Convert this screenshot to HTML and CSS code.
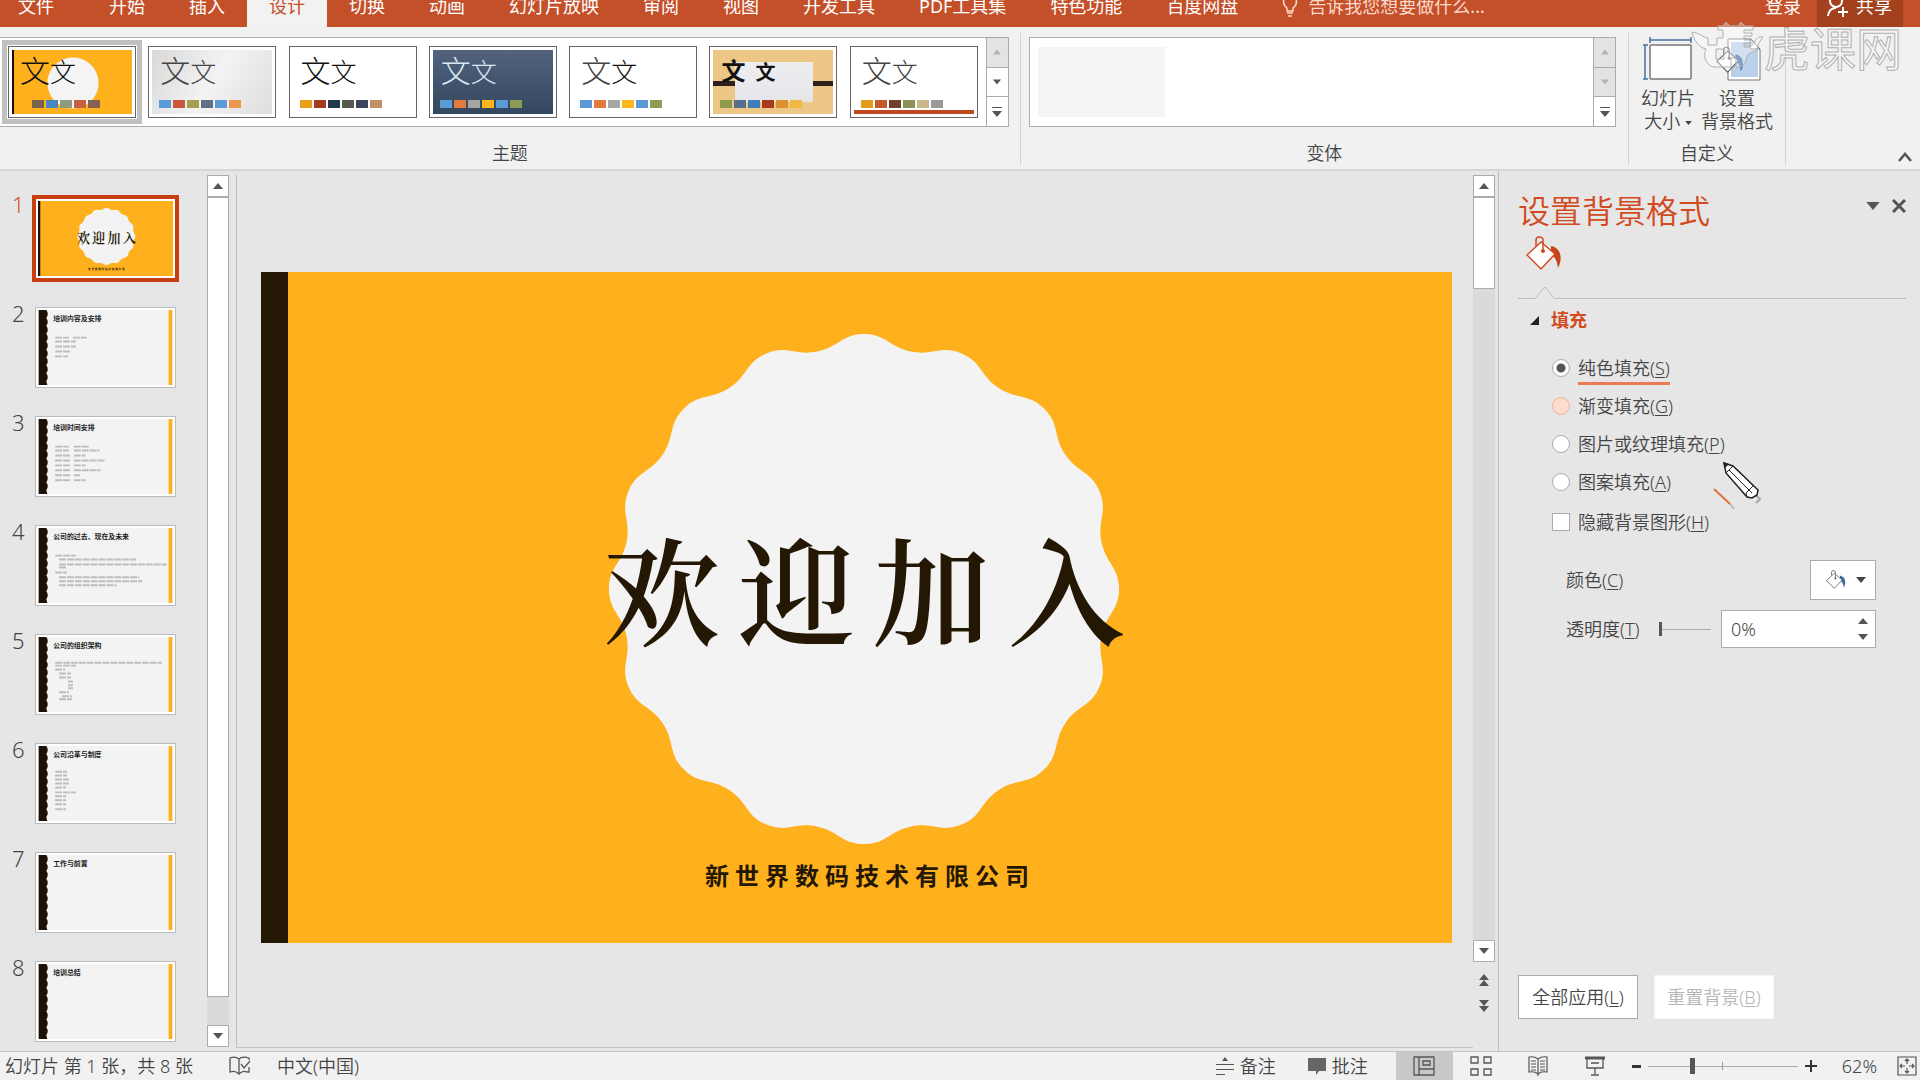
FILE: index.html
```html
<!DOCTYPE html>
<html lang="zh-CN">
<head>
<meta charset="utf-8">
<title>演示文稿</title>
<link rel="stylesheet" href="styles.css">
</head>
<body>
<svg class="defs" aria-hidden="true">
  <defs>
    <path id="quarter" d="M-4 0V-255H0C22-255 25.600-241.700 47.200-237.400C68.800-233.100 77.300-244 97.600-235.600C117.900-227.200 116.100-213.400 134.400-201.200C152.700-189 164.700-195.900 180.300-180.300C195.900-164.700 189-152.700 201.200-134.400C213.400-116.100 227.200-117.900 235.600-97.600C244-77.300 233.100-68.800 237.400-47.200C241.700-25.600 255-22 255 0V4H0Z"/>
    <g id="badge"><circle r="241"/><use href="#quarter"/><use href="#quarter" transform="rotate(90)"/><use href="#quarter" transform="rotate(180)"/><use href="#quarter" transform="rotate(270)"/></g>
    <symbol id="page" viewBox="0 0 136 76" preserveAspectRatio="none">
      <path fill="#f3f3f3" d="M0 0H136V76H0Z"/><path fill="#ffb11d" d="M132 0H136V76H132Z"/>
      <path fill="#1d1105" d="M0 0H8Q11 4 8 8Q11 12 8 16Q11 20 8 24Q11 28 8 32Q11 36 8 40Q11 44 8 48Q11 52 8 56Q11 60 8 64Q11 68 8 72L9 76H0Z"/>
    </symbol>
    <symbol id="bucket" viewBox="0 0 36 36">
      <path class="drop" d="M25 10C35 12 37 22 32 32C31 25 30 22 25 19Z"/>
      <path fill="#fff" stroke="currentColor" stroke-width="1.500" d="M15 6L29 18L15 33L1 19Z"/>
      <path fill="none" stroke="currentColor" stroke-width="1.500" d="M10 10V4Q10 1 13 1Q17 1 17 4V14"/><circle cx="17" cy="15" r="2" fill="currentColor"/>
    </symbol>
    <symbol id="up" viewBox="0 0 10 6"><path fill="currentColor" d="M5 0L10 6H0Z"/></symbol>
    <symbol id="down" viewBox="0 0 10 6"><path fill="currentColor" d="M0 0H10L5 6Z"/></symbol>
    <symbol id="more" viewBox="0 0 10 10"><path fill="currentColor" d="M0 0H10V1H0ZM0 4H10L5 10Z"/></symbol>
  </defs>
</svg>

<header class="tabs">
  <nav class="tab-list">
    <button class="tab file">文件</button><button class="tab">开始</button><button class="tab">插入</button><button class="tab active">设计</button><button class="tab">切换</button><button class="tab">动画</button><button class="tab">幻灯片放映</button><button class="tab">审阅</button><button class="tab">视图</button><button class="tab">开发工具</button><button class="tab">PDF工具集</button><button class="tab">特色功能</button><button class="tab">百度网盘</button>
  </nav>
  <button class="tell"><svg width="16" height="22" viewBox="0 0 16 22" fill="none" stroke="currentColor" stroke-width="1.500"><path d="M5 16V13C0 9 0 1 8 1S16 9 11 13V16ZM5 18H11M6 21H10"/></svg>告诉我您想要做什么...</button>
  <button class="login">登录</button>
  <button class="share"><svg width="24" height="24" viewBox="0 0 24 24" fill="none" stroke="currentColor" stroke-width="2"><circle cx="10" cy="7" r="6"/><path d="M2 22Q3 14 10 14M17 13V23M12 18H22"/></svg>共享</button>
</header>

<section class="ribbon">
  <div class="group themes">
    <div class="gallery">
      <div class="theme-list">
        <button class="theme t1 selected"><span class="wen"><b>文</b>文</span><i class="sw"><i></i><i></i><i></i><i></i><i></i></i></button>
        <button class="theme t2"><span class="wen"><b>文</b>文</span><i class="sw"><i></i><i></i><i></i><i></i><i></i><i></i></i></button>
        <button class="theme t3"><span class="wen"><b>文</b>文</span><i class="sw"><i></i><i></i><i></i><i></i><i></i><i></i></i></button>
        <button class="theme t4"><span class="wen"><b>文</b>文</span><i class="sw"><i></i><i></i><i></i><i></i><i></i><i></i></i></button>
        <button class="theme t5"><span class="wen"><b>文</b>文</span><i class="sw"><i></i><i></i><i></i><i></i><i></i><i></i></i></button>
        <button class="theme t6"><span class="wen"><b>文</b>文</span><i class="sw"><i></i><i></i><i></i><i></i><i></i><i></i></i></button>
        <button class="theme t7"><span class="wen"><b>文</b>文</span><i class="sw"><i></i><i></i><i></i><i></i><i></i><i></i></i></button>
      </div>
      <div class="steps"><button class="off" aria-label="上一行"><svg width="8" height="6"><use href="#up"/></svg></button><button aria-label="下一行"><svg width="8" height="6"><use href="#down"/></svg></button><button aria-label="其他"><svg width="10" height="10"><use href="#more"/></svg></button></div>
    </div>
    <div class="caption">主题</div>
  </div>
  <div class="group variants">
    <div class="gallery">
      <div class="variant-list"><div class="variant"></div></div>
      <div class="steps"><button class="off" aria-label="上一行"><svg width="8" height="6"><use href="#up"/></svg></button><button class="off" aria-label="下一行"><svg width="8" height="6"><use href="#down"/></svg></button><button aria-label="其他"><svg width="10" height="10"><use href="#more"/></svg></button></div>
    </div>
    <div class="caption">变体</div>
  </div>
  <div class="group custom">
    <div class="big-row">
      <button class="big"><svg width="50" height="44" viewBox="0 0 50 44" fill="none"><path stroke="#4472a8" stroke-width="1.500" d="M7 3H48M7 0V6M48 0V6M2 8V42M0 8H5M0 42H5"/><rect x="7" y="8" width="41" height="34" rx="1" fill="#fff" stroke="#777" stroke-width="1.500"/></svg><span>幻灯片<br>大小 <svg width="7" height="4"><use href="#down"/></svg></span></button>
      <button class="big"><svg width="50" height="44" viewBox="0 0 50 44"><path fill="#fff" stroke="#777" d="M16 2H39L48 12V43H16Z"/><path fill="#b9d0ea" d="M19 5H37V13H46V40H19Z"/><path fill="none" stroke="#777" d="M38 2V12H48"/><svg class="blue" x="4" y="8" width="28" height="31"><use href="#bucket"/></svg></svg><span>设置<br>背景格式</span></button>
    </div>
    <div class="caption">自定义</div>
  </div>
  <div class="tail"><button class="fold" aria-label="折叠功能区"><svg width="14" height="10" viewBox="0 0 14 10" fill="none" stroke="#555" stroke-width="2.500"><path d="M1 9L7 2L13 9"/></svg></button></div>
  <div class="mark"><svg width="74" height="50" viewBox="0 0 74 50"><path d="M2 11C10 12 12 16 18 17V24H27V17H33V9H28V5H33L36 1L40 5H48L51 1L55 5H63V9H54V12H62V15H54V19H62V22H54V26H60C65 23 66 14 73 16C66 24 69 30 60 32C54 35 59 40 51 46H46V37H41V46H23C15 43 13 35 16 28C8 26 4 19 2 11ZM26 28V38H34V28Z"/></svg><span>虎课网</span></div>
</section>

<main class="work">
  <ol class="slides">
    <li class="current"><span class="no">1</span><svg class="thumb" viewBox="0 0 1191 671" preserveAspectRatio="none"><path fill="#ffb11d" d="M0 0H1191V671H0Z"/><path fill="#1d1105" d="M0 0H20V671H0Z"/><use href="#badge" x="603" y="317" fill="#f3f3f3"/><text class="s-title" x="612" y="372">欢迎加入</text><text class="s-sub" x="606" y="613">新世界数码技术有限公司</text></svg></li>
    <li><span class="no">2</span><svg class="thumb" viewBox="0 0 136 76"><use href="#page"/><text x="15" y="11">培训内容及安排</text><path class="ln" d="M17 28H31M35 28H49M17 32H38M17 37H38M17 42H32M17 47H30"/></svg></li>
    <li><span class="no">3</span><svg class="thumb" viewBox="0 0 136 76"><use href="#page"/><text x="15" y="11">培训时间安排</text><path class="ln" d="M17 28H31M36 28H51M17 32H31M36 32H62M17 37H33M36 37H48M17 42H33M36 42H68M17 47H33M36 47H48M17 52H33M36 52H63M17 57H33M36 57H42M17 62H33M36 62H48"/></svg></li>
    <li><span class="no">4</span><svg class="thumb" viewBox="0 0 136 76"><use href="#page"/><text x="15" y="11">公司的过去、现在及未来</text><path class="ln" d="M17 28H38M21 32H99M21 37H130M21 40H28M17 45H29M21 50H102M21 54H105M21 58H79"/></svg></li>
    <li><span class="no">5</span><svg class="thumb" viewBox="0 0 136 76"><use href="#page"/><text x="15" y="11">公司的组织架构</text><path class="ln" d="M17 26H125M17 29H38M17 33H27M21 37H33M21 41H33M30 45H35M30 49H35M30 52H35M21 56H31M24 60H34M21 63H34"/></svg></li>
    <li><span class="no">6</span><svg class="thumb" viewBox="0 0 136 76"><use href="#page"/><text x="15" y="11">公司沿革与制度</text><path class="ln" d="M17 26H29M17 30H29M17 34H31M17 38H31M17 42H28M17 47H38M17 51H28M17 55H28M17 59H28M17 64H28"/></svg></li>
    <li><span class="no">7</span><svg class="thumb" viewBox="0 0 136 76"><use href="#page"/><text x="15" y="11">工作与前置</text></svg></li>
    <li><span class="no">8</span><svg class="thumb" viewBox="0 0 136 76"><use href="#page"/><text x="15" y="11">培训总结</text></svg></li>
  </ol>
  <div class="bar left"><button aria-label="向上"><svg width="10" height="6"><use href="#up"/></svg></button><div class="grip"></div><div class="rest"></div><button aria-label="向下"><svg width="10" height="6"><use href="#down"/></svg></button></div>

  <div class="stage">
    <svg class="slide" viewBox="0 0 1191 671"><path fill="#ffb11d" d="M0 0H1191V671H0Z"/><path fill="#241703" d="M0 0H27V671H0Z"/><use href="#badge" x="603" y="317" fill="#f3f3f3"/><text class="s-title" x="612" y="365">欢迎加入</text><text class="s-sub" x="609" y="613">新世界数码技术有限公司</text></svg>
  </div>
  <div class="bar right"><button aria-label="向上"><svg width="10" height="6"><use href="#up"/></svg></button><div class="grip"></div><div class="rest"></div><button aria-label="向下"><svg width="10" height="6"><use href="#down"/></svg></button>
    <div class="jumps"><button aria-label="上一张"><svg width="10" height="12"><path d="M5 0L10 6H0ZM5 6L10 12H0Z"/></svg></button><button aria-label="下一张"><svg width="10" height="12"><path d="M5 6L10 0H0ZM5 12L10 6H0Z"/></svg></button></div></div>

  <aside class="pane">
    <div class="pane-head"><h2>设置背景格式</h2><button aria-label="选项"><svg width="14" height="8"><use href="#down"/></svg></button><button aria-label="关闭"><svg width="14" height="14" viewBox="0 0 14 14" stroke="currentColor" stroke-width="3"><path d="M1 1L13 13M13 1L1 13"/></svg></button></div>
    <button class="fill-tab" aria-label="填充"><svg width="36" height="36"><use href="#bucket"/></svg></button>
    <div class="rule"><svg width="37" height="13" viewBox="0 0 37 13" fill="none" stroke="#bdbdbd"><path d="M0 12.500H17L27 1L36 12.500"/></svg><i></i></div>
    <h3><svg width="9" height="9"><path d="M9 0V9H0Z"/></svg>填充</h3>
    <div class="options">
      <label class="picked"><input type="radio" name="fill" checked><span>纯色填充(<u>S</u>)</span></label>
      <label class="hover"><input type="radio" name="fill"><span>渐变填充(<u>G</u>)</span></label>
      <label><input type="radio" name="fill"><span>图片或纹理填充(<u>P</u>)</span></label>
      <label><input type="radio" name="fill"><span>图案填充(<u>A</u>)</span></label>
      <label class="check"><input type="checkbox"><span>隐藏背景图形(<u>H</u>)</span></label>
    </div>
    <div class="field"><label for="color">颜色(<u>C</u>)</label><button id="color" class="color"><svg class="blue" width="20" height="20"><use href="#bucket"/></svg><svg width="10" height="6"><use href="#down"/></svg></button></div>
    <div class="field"><label for="alpha">透明度(<u>T</u>)</label><input class="range" type="range" min="0" max="100" value="0" aria-label="透明度"><div class="spin"><input id="alpha" type="text" value="0%"><div><button aria-label="增加"><svg width="10" height="6"><use href="#up"/></svg></button><button aria-label="减少"><svg width="10" height="6"><use href="#down"/></svg></button></div></div></div>
    <div class="actions"><button>全部应用(<u>L</u>)</button><button disabled>重置背景(<u>B</u>)</button></div>
    <svg class="pencil" width="54" height="54" viewBox="0 0 54 54"><path stroke="#a9a9a9" stroke-width="2" d="M24 16L48 38L44 42"/><path stroke="#e2703f" stroke-width="2" d="M2 28L18 43"/><path stroke="#b9b9b9" stroke-width="2" d="M18 43L22 48"/><path fill="#fff" stroke="#222" stroke-width="1.500" d="M12 2L21 5L46 29L45 34L40 37L35 36L14 12Z"/><path fill="none" stroke="#222" d="M14 12L21 5M17 9L40 32M35 36L34 32L41 25"/><path fill="#222" d="M11 1L17 3L13 7Z"/></svg>
  </aside>
</main>

<footer class="status">
  <span class="count">幻灯片 第 1 张，共 8 张</span>
  <button class="spell" aria-label="拼写检查"><svg width="22" height="20" viewBox="0 0 22 20" fill="none" stroke="#555" stroke-width="1.300"><path d="M10 17V3Q6 0 1 2V16Q6 14 10 18Q14 14 18 16H20V11M10 3Q13 0 20 2V4M12 8L15 12L21 5"/></svg></button>
  <button class="lang">中文(中国)</button>
  <span class="space"></span>
  <button class="note"><svg width="18" height="18" viewBox="0 0 18 18"><path fill="#555" d="M9 0L12 4H6ZM0 7H18V8H0ZM0 12H18V13H0ZM0 17H9V18H0Z"/></svg>备注</button>
  <button class="comment"><svg width="18" height="18" viewBox="0 0 18 18"><path fill="#666" d="M0 1H18V14H11L8 18V14H0Z"/></svg>批注</button>
  <button class="view on" aria-label="普通视图"><svg width="22" height="20" viewBox="0 0 22 20" fill="none" stroke="#555" stroke-width="1.300"><path d="M1 1H21V19H1ZM6 1V19M6 13H21M10 5H17V9H10Z"/></svg></button>
  <button class="view" aria-label="幻灯片浏览"><svg width="22" height="20" viewBox="0 0 22 20" fill="none" stroke="#555" stroke-width="1.300"><path d="M1 1H8V7H1ZM14 1H21V7H14ZM1 13H8V19H1ZM14 13H21V19H14Z"/></svg></button>
  <button class="view" aria-label="阅读视图"><svg width="20" height="20" viewBox="0 0 20 20" fill="none" stroke="#555" stroke-width="1.200"><path d="M10 3Q6 0 1 1V16Q7 15 10 18Q13 15 19 16V1Q14 0 10 3V20M3 5H8M3 8H8M3 11H8M3 14H8M12 5H17M12 8H17M12 11H17M12 14H17"/></svg></button>
  <button class="view" aria-label="幻灯片放映"><svg width="20" height="20" viewBox="0 0 20 20" fill="none" stroke="#555" stroke-width="1.300"><path d="M2 3V12H18V3M10 12V18M6 19H14M6 7H14"/><path stroke-width="3" d="M0 2H20"/></svg></button>
  <button class="zoom" aria-label="缩小"><svg width="9" height="12"><path fill="#333" d="M0 5H9V8H0Z"/></svg></button>
  <input class="range zoomer" type="range" min="0" max="100" value="29" aria-label="缩放">
  <button class="zoom" aria-label="放大"><svg width="12" height="12"><path fill="#333" d="M0 5H5V0H7V5H12V7H7V12H5V7H0Z"/></svg></button>
  <button class="pct">62%</button>
  <button class="fit" aria-label="适应窗口"><svg width="20" height="20" viewBox="0 0 20 20" fill="none" stroke="#555" stroke-width="1.200"><path d="M1 1H19V19H1ZM10 3V8M8 5L10 3L12 5M10 12V17M8 15L10 17L12 15M3 10H8M5 8L3 10L5 12M12 10H17M15 8L17 10L15 12"/></svg></button>
</footer>
</body>
</html>
```

FILE: styles.css
```css
* { box-sizing: border-box; }
body {
  margin: 0; height: 100vh; display: flex; flex-direction: column; overflow: hidden;
  font: 18px/24px "Noto Sans", "Noto Sans CJK SC", sans-serif; font-weight: 350;
  color: #444; background: #e6e6e6;
}
button, input { font: inherit; color: inherit; }
button { margin: 0; padding: 0; border: 0; background: none; white-space: nowrap; }
svg { display: block; flex: none; }
.defs { position: absolute; width: 0; height: 0; }
.drop { fill: var(--drop, #c8421a); }
.blue { color: #666; --drop: #3c6ca8; }

/* Tab strip */
.tabs { flex: none; height: 27px; display: flex; background: #c4502a; color: #fff; overflow: hidden; font-weight: 400; }
.tab-list { display: flex; }
.tabs button { height: 27px; line-height: 12px; padding: 0 22px 15px; }
.tabs .file { padding: 0 33px 15px 18px; }
.tabs .active { background: #f3f2f2; color: #c4502a; }
.tabs .tell { display: flex; align-items: center; gap: 10px; color: #fbd9cb; margin-right: auto; }
.tabs .login { padding: 0 16px 15px; }
.tabs .share { display: flex; align-items: center; gap: 6px; background: #a3401d; padding: 0 11px 15px 9px; margin-right: 17px; }

/* Ribbon */
.ribbon { flex: none; height: 144px; display: flex; position: relative; background: #f1f1f1; border-bottom: 2px solid #d6d6d6; padding: 6px 0 4px; }
.group { display: flex; flex-direction: column; justify-content: space-between; border-right: 1px solid #d2d2d2; padding-top: 4px; }
.themes { flex: 1021; }
.variants { flex: 608; }
.custom { flex: 0 0 157px; }
.caption { text-align: center; line-height: 24px; }
.gallery { display: flex; height: 90px; border: 1px solid #ababab; background: #fff; }
.themes .gallery { border-left: 0; margin-right: 11px; }
.variants .gallery { margin: 0 12px 0 8px; }
.theme-list { flex: 1; display: flex; justify-content: space-between; align-items: center; padding: 0 8px; }
.theme { width: 128px; height: 72px; border: 1px solid #666; padding: 3px; display: flex; flex-direction: column; color: #111; text-align: left; background-color: #fff; background-origin: content-box; background-clip: content-box; }
.theme.selected { box-shadow: 0 0 0 1px #fff, 0 0 0 6px #c0c0c0; }
.wen { font-size: 26px; line-height: 38px; height: 50px; padding: 2px 0 0 8px; font-weight: 300; }
.wen b { font-size: 30px; font-weight: 300; }
.sw { display: flex; gap: 2px; padding-left: 7px; }
.sw i { width: 12px; height: 8px; background: #5b9bd5; }
.sw i:nth-child(2) { background: #c55a36; } .sw i:nth-child(3) { background: #a3a14c; } .sw i:nth-child(4) { background: #5f7189; } .sw i:nth-child(6) { background: #e8994b; }
.t1 { background-color: #ffb11d; background-image: linear-gradient(90deg, #111 2px, transparent 2px), radial-gradient(circle at 61px 33px, #f4f4f4 25px, transparent 26px); }
.t1 .sw { padding-left: 20px; }
.t1 .sw i { background: #76654c; } .t1 .sw i:nth-child(2) { background: #4488bd; } .t1 .sw i:nth-child(3) { background: #8d9c80; } .t1 .sw i:nth-child(4) { background: #c65f43; } .t1 .sw i:nth-child(5) { background: #866153; }
.t2 { background-image: linear-gradient(120deg, #d8d8d8, #f3f3f3 50%, #dedede); }
.t2 .wen, .t5 .wen b, .t7 .wen { color: #444; }
.t3 .sw i { background: #e9a019; } .t3 .sw i:nth-child(2) { background: #a63c1c; } .t3 .sw i:nth-child(3) { background: #26384f; } .t3 .sw i:nth-child(4) { background: #565a4e; } .t3 .sw i:nth-child(5) { background: #39465a; } .t3 .sw i:nth-child(6) { background: #bf9061; }
.t4 { background-image: linear-gradient(#53637e, #33475e); } .t4 .wen { color: #dbe7f5; }
.t4 .sw i:nth-child(2), .t5 .sw i:nth-child(2) { background: #e27b3d; }
.t4 .sw i:nth-child(3), .t5 .sw i:nth-child(3) { background: #a5a5a5; } .t4 .sw i:nth-child(4), .t5 .sw i:nth-child(4) { background: #ffb71c; } .t4 .sw i:nth-child(6), .t5 .sw i:nth-child(6) { background: #8e9b55; }
.t6 { background-color: #ecc785; background-image: linear-gradient(#eeeef1, #e6e6ea), linear-gradient(transparent 31px, #30201b 31px, #30201b 36px, transparent 36px); background-size: 78px 40px, auto; background-position: 22px 12px, 0 0; background-repeat: no-repeat; }
.t6 .wen { font-weight: 700; font-size: 20px; } .t6 .wen b { font-weight: 700; font-size: 24px; margin-right: 10px; }
.t6 .sw i { background: #8e9b4e; } .t6 .sw i:nth-child(2) { background: #566f91; } .t6 .sw i:nth-child(3) { background: #3f7dbb; } .t6 .sw i:nth-child(4) { background: #a63c1c; } .t6 .sw i:nth-child(5) { background: #df9132; } .t6 .sw i:nth-child(6) { background: #eeb842; }
.t7 { background-image: linear-gradient(transparent 60px, #bd4a20 60px); }
.t7 .sw i { background: #e39c1b; } .t7 .sw i:nth-child(2) { background: #c75829; } .t7 .sw i:nth-child(3) { background: #70402e; } .t7 .sw i:nth-child(4) { background: #8c9156; } .t7 .sw i:nth-child(5) { background: #c7b98a; } .t7 .sw i:nth-child(6) { background: #999; }
.variant-list { flex: 1; padding: 9px 8px; }
.variant { width: 127px; height: 70px; background: #f4f3f6; }
.steps { width: 22px; display: flex; flex-direction: column; border-left: 1px solid #ababab; color: #555; }
.steps button { flex: 1; display: grid; place-items: center; }
.steps button + button { border-top: 1px solid #ababab; }
.steps .off { background: #e3e3e3; color: #b3b3b3; }
.big-row { display: flex; padding-left: 9px; }
.big { width: 60px; line-height: 23px; }
.big + .big { width: 78px; }
.big > svg { margin: 0 auto 6px; }
.big span svg { display: inline-block; vertical-align: middle; }
.tail { flex: 0 0 134px; display: flex; justify-content: flex-end; align-items: flex-end; padding: 0 8px 3px; }
.mark { position: absolute; right: 18px; top: -6px; display: flex; align-items: center; color: rgba(255, 255, 255, .35); -webkit-text-stroke: 1px #b0b0b0; font: 400 46px/46px "Noto Sans CJK SC", sans-serif; pointer-events: none; }
.mark path { fill: rgba(255, 255, 255, .35); stroke: #b0b0b0; stroke-width: 1; }

/* Slide list */
.work { flex: 1; min-height: 0; display: flex; }
.slides { flex: 0 0 207px; margin: 0; padding: 27px 0 0 12px; list-style: none; display: flex; flex-direction: column; gap: 28px; overflow: hidden; }
.slides li { display: flex; height: 81px; flex: none; }
.no { width: 23px; font-size: 22px; line-height: 12px; }
.thumb { width: 141px; height: 81px; border: 1px solid #bbb; padding: 2px; background: #fff; }
.current .no { color: #d5532b; }
.current .thumb { border-color: #c73e10; box-shadow: 0 0 0 3px #c73e10; }
.thumb text { font-size: 7px; font-weight: 700; fill: #222; }
.thumb .ln { stroke: #bdbdbd; stroke-width: 2; stroke-dasharray: 7 1; fill: none; }

/* Scroll bars */
.bar { flex: none; width: 22px; margin: 4px 0; display: flex; flex-direction: column; color: #555; background: #dadada; }
.bar button { height: 22px; flex: none; background: #fff; border: 1px solid #ababab; display: grid; place-items: center; }
.grip { flex: 800; background: #fff; border: 1px solid #ababab; }
.rest { flex: 28; }
.right .grip { flex: 89; }
.right .rest { flex: 641; }
.jumps { height: 85px; background: #e6e6e6; padding-top: 5px; }
.bar .jumps button { width: 22px; height: 26px; border: 0; background: none; }
.jumps path { fill: #555; }

/* Slide canvas */
.stage { flex: 1; min-width: 0; margin: 4px 0 3px 7px; border-left: 1px solid #bdbdbd; border-bottom: 1px solid #c4c4c4; padding: 97px 21px 0 24px; }
.slide { width: 100%; height: auto; }
.s-title, .thumb .s-title { font: 600 117px "Noto Serif CJK SC", "Noto Sans CJK SC", serif; letter-spacing: 18px; text-anchor: middle; fill: #241703; }
.s-sub, .thumb .s-sub { font: 700 24px "Noto Sans CJK SC", sans-serif; letter-spacing: 6px; text-anchor: middle; fill: #241703; }

/* Format pane */
.pane { position: relative; flex: 0 0 422px; margin-left: 3px; padding: 20px 14px 32px 19px; display: flex; flex-direction: column; border-left: 1px solid #bdbdbd; }
.pane-head { display: flex; align-items: center; gap: 12px; color: #555; height: 40px; }
.pane h2 { margin: 0 auto 0 0; font-size: 32px; line-height: 40px; font-weight: 350; color: #d24a20; }
.pane-head button { padding-bottom: 10px; }
.fill-tab { align-self: flex-start; margin: 5px 0 0 8px; color: #d24a20; }
.rule { display: flex; align-items: flex-end; margin: 14px 0 9px; }
.rule i { flex: 1; height: 1px; background: #bdbdbd; }
.pane h3 { margin: 0 0 17px 12px; font-size: 18px; line-height: 24px; color: #d24a20; display: flex; align-items: center; gap: 12px; }
.pane h3 path { fill: #222; }
.options { display: flex; flex-direction: column; padding-left: 34px; }
.options label { display: flex; align-items: center; gap: 8px; height: 38px; }
.options .check { height: 42px; }
.options span { border-bottom: 3px solid transparent; border-top: 3px solid transparent; line-height: 28px; }
.options .picked span { border-bottom-color: #ea7b51; }
.options input { appearance: none; width: 18px; height: 18px; margin: 0; background: #fff; border: 1px solid #ababab; border-radius: 9px; }
.options .check input { border-radius: 0; }
.options input:checked { background: radial-gradient(circle, #555 4px, #fff 5px); }
.options .hover input { background: #fcdccd; border-color: #f0b399; }
u { text-underline-offset: 2px; text-decoration-thickness: 1px; }
.field { display: flex; align-items: center; height: 40px; margin: 17px 30px 0 48px; }
.field + .field { margin-top: 9px; }
.color { margin-left: auto; width: 66px; height: 40px; display: flex; align-items: center; justify-content: center; gap: 10px; padding-left: 6px; background: #fff; border: 1px solid #ababab; }
.range { appearance: none; width: 52px; height: 20px; margin: 0 10px 0 auto; background: linear-gradient(#ababab, #ababab) center / 100% 1px no-repeat; }
.range::-webkit-slider-thumb { appearance: none; width: 3px; height: 14px; background: #555; }
.spin { width: 155px; height: 38px; display: flex; background: #fff; border: 1px solid #ababab; }
.spin input { flex: 1; min-width: 0; border: 0; background: none; padding: 0 9px; }
.spin > div { width: 17px; display: flex; flex-direction: column; justify-content: center; gap: 10px; color: #555; }
.actions { display: flex; gap: 16px; margin-top: auto; }
.actions button { width: 120px; height: 44px; background: #fff; border: 1px solid #ababab; }
.actions button:disabled { border-color: #f5f5f5; color: #b5b5b5; }
.pencil { position: absolute; right: 154px; top: 290px; fill: none; }

/* Status bar */
.status { flex: none; height: 29px; display: flex; align-items: center; background: #f1f1f1; border-top: 1px solid #c4c4c4; padding: 0 3px 0 5px; line-height: 24px; }
.count { width: 224px; white-space: nowrap; }
.lang { margin-left: 26px; }
.space { flex: 1; }
.note, .comment { display: flex; align-items: center; gap: 6px; }
.comment { margin: 0 28px 0 32px; }
.view { width: 57px; height: 28px; display: grid; place-items: center; }
.view.on { background: #c8c8c8; }
.fit { margin-left: 20px; }
.zoomer { width: 150px; margin: 0 7px; background: linear-gradient(#999, #999) center / 1px 8px no-repeat, linear-gradient(#ababab, #ababab) center / 100% 1px no-repeat; }
.zoomer::-webkit-slider-thumb { width: 5px; height: 16px; }
.view + .zoom { margin-left: 8px; }
.pct { margin-left: 25px; }
```
